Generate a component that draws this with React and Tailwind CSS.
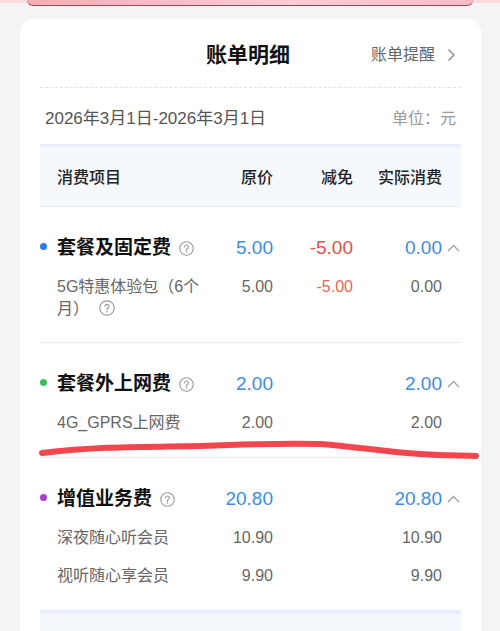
import React from "react";

const FONT = { fontFamily: '"Liberation Sans", "Noto Sans CJK SC", sans-serif' };

function Help({ size = 15 }) {
  return (
    <svg width={size} height={size} viewBox="0 0 16 16" className="shrink-0">
      <circle cx="8" cy="8" r="7.2" fill="none" stroke="#9a9a9a" strokeWidth="1.2" />
      <path d="M6 6.3a2 2 0 1 1 2.9 1.8c-.6.3-.9.7-.9 1.3v.6" fill="none" stroke="#9a9a9a" strokeWidth="1.2" strokeLinecap="round" />
      <circle cx="8" cy="11.8" r="0.8" fill="#9a9a9a" />
    </svg>
  );
}

function Caret() {
  return (
    <svg width="13" height="8" viewBox="0 0 13 8" className="ml-[5px]">
      <path d="M1 7 L6.5 1.5 L12 7" fill="none" stroke="#a0a0a0" strokeWidth="1.3" />
    </svg>
  );
}

const ROW = "grid grid-cols-[167px_66px_80px_89px_19px] items-center";

function Group({ dot, name, orig, disc, actual, items, pb }) {
  return (
    <div className={"pt-[27px] border-b border-[#e6edf7] " + pb}>
      <div className={ROW + " h-[26px]"}>
        <div className="flex items-center">
          <span className={"w-[7px] h-[7px] rounded-full -mt-[3px] mr-[10px] " + dot} />
          <span className="text-[19px] leading-[26px] font-bold text-[#111]">{name}</span>
          <span className="ml-[8px]"><Help /></span>
        </div>
        <div className="text-right text-[19px] text-[#3d8de0]">{orig}</div>
        <div className="text-right text-[19px] text-[#d9534a]">{disc}</div>
        <div className="text-right text-[19px] text-[#3d8de0]">{actual}</div>
        <div className="flex items-center"><Caret /></div>
      </div>
      {items.map((it, i) => (
        <div key={i} className={ROW + " items-start mt-[16px] text-[16px] leading-[22px]"}>
          <div className="pl-[17px] text-[#666]">
            {it.name}
            {it.help && (
              <span className="inline-block align-middle ml-[10px] -mt-[3px]"><Help size={16} /></span>
            )}
          </div>
          <div className="text-right text-[#666]">{it.orig}</div>
          <div className="text-right text-[#e0665a]">{it.disc}</div>
          <div className="text-right text-[#666]">{it.actual}</div>
          <div />
        </div>
      ))}
    </div>
  );
}

export default function App() {
  return (
    <div style={FONT} className="relative w-[500px] h-[631px] overflow-hidden bg-[#f4f4f4]">
      <div className="h-[6px] bg-[linear-gradient(#fbdde0_0_50%,#f4f4f4_50%)]">
        <div className="mx-[27px] h-full rounded-b-[6px] bg-[linear-gradient(90deg,#f3aeb7,#f9cdd3_60%,#f6bdc4)] border-b-[1.5px] border-[#a8424c]" />
      </div>

      <div className="mt-[13px] ml-[20px] mr-[19px] bg-white rounded-[14px] px-[20px] h-[640px]">
        <div className="grid grid-cols-[1fr_auto_1fr] items-center h-[68px] pt-[4px] pr-[5px]">
          <div />
          <div className="text-[21px] font-bold text-[#111]">账单明细</div>
          <div className="flex items-center justify-end text-[16px] text-[#666]">
            账单提醒
            <svg width="9" height="14" viewBox="0 0 9 14" className="ml-[12px]">
              <path d="M1.5 1.5 L7 7 L1.5 12.5" fill="none" stroke="#888" strokeWidth="1.3" />
            </svg>
          </div>
        </div>

        <div className="border-t border-dashed border-[#e3e3e3]" />

        <div className="flex items-center justify-between px-[5px] pt-[20px] pb-[14px] leading-[22px]">
          <span className="text-[17px] text-[#555]">2026年3月1日-2026年3月1日</span>
          <span className="text-[16px] text-[#999]">单位：元</span>
        </div>

        <div className={ROW + " h-[63px] border-t-[3px] border-b border-t-[#e6effb] border-b-[#e6eef9] bg-[#f5f9fe] pt-[2px] text-[16px] font-medium text-[#222]"}>
          <div className="pl-[17px]">消费项目</div>
          <div className="text-right">原价</div>
          <div className="text-right">减免</div>
          <div className="text-right">实际消费</div>
          <div />
        </div>

        <Group
          pb="pb-[22px]"
          dot="bg-[#2a7be4]"
          name="套餐及固定费"
          orig="5.00"
          disc="-5.00"
          actual="0.00"
          items={[{ name: "5G特惠体验包（6个月）", help: true, orig: "5.00", disc: "-5.00", actual: "0.00" }]}
        />
        <Group
          pb="pb-[23px]"
          dot="bg-[#3cc05a]"
          name="套餐外上网费"
          orig="2.00"
          disc=""
          actual="2.00"
          items={[{ name: "4G_GPRS上网费", orig: "2.00", disc: "", actual: "2.00" }]}
        />
        <Group
          pb="pb-[23px]"
          dot="bg-[#a53fd6]"
          name="增值业务费"
          orig="20.80"
          disc=""
          actual="20.80"
          items={[
            { name: "深夜随心听会员", orig: "10.90", disc: "", actual: "10.90" },
            { name: "视听随心享会员", orig: "9.90", disc: "", actual: "9.90" },
          ]}
        />
        <div className="h-[60px] border-t-[3px] border-[#e6effb] bg-[#f5f9fe]" />
      </div>

      <svg className="absolute left-0 top-0 pointer-events-none" width="500" height="631">
        <path
          d="M42 453 C 100 446, 150 447, 200 446 C 250 444, 290 443, 320 444 C 360 447, 385 452, 420 454 C 450 456, 465 455, 476 456"
          fill="none"
          stroke="#f1464d"
          strokeWidth="6"
          strokeLinecap="round"
        />
      </svg>
    </div>
  );
}
